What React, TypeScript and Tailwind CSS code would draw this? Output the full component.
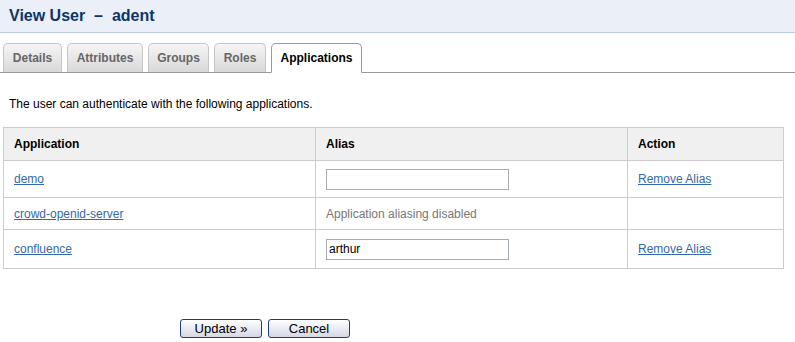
import React from 'react';

const TABS = [
    { label: 'Details', w: 'w-[59px]' },
    { label: 'Attributes', w: 'w-[76px]' },
    { label: 'Groups', w: 'w-[61px]' },
    { label: 'Roles', w: 'w-[52px]' },
    { label: 'Applications', w: 'w-[91px]' },
];

const ROWS = [
    { name: 'demo', alias: '', aliasing: true, h: 'h-[37px]' },
    { name: 'crowd-openid-server', alias: null, aliasing: false, h: 'h-[32px]' },
    { name: 'confluence', alias: 'arthur', aliasing: true, h: 'h-[39px]' },
];

export default function App() {
    return (
        <div className="w-[795px] h-[342px] bg-white text-[12px] text-black font-['Liberation_Sans',Arial,sans-serif]">
            {/* page title */}
            <div className="h-[33px] bg-[#eaeff8] border-b border-[#b8cde4] pl-[9px] flex items-center">
                <h1 className="text-[16px] font-bold text-[#0e3566] leading-none">View User &nbsp;–&nbsp; adent</h1>
            </div>

            {/* tabs */}
            <div className="mt-[10px] flex items-end gap-[5px] pl-[3px] border-b border-[#999] h-[30px]">
                {TABS.map((t) => {
                    const active = t.label === 'Applications';
                    return active ? (
                        <div
                            key={t.label}
                            className={`${t.w} h-[30px] -mb-px flex items-center justify-center bg-white border border-[#999] border-b-white rounded-t-[5px] font-bold text-black`}
                        >
                            {t.label}
                        </div>
                    ) : (
                        <div
                            key={t.label}
                            className={`${t.w} h-[29px] flex items-center justify-center bg-gradient-to-b from-[#f6f6f6] to-[#d8d8d8] border border-[#c6c6c6] border-b-0 rounded-t-[5px] font-bold text-[#666]`}
                        >
                            {t.label}
                        </div>
                    );
                })}
            </div>

            <p className="pl-[9px] mt-[24px] leading-[14px]">The user can authenticate with the following applications.</p>

            {/* applications table */}
            <table className="ml-[3px] mt-[16px] w-[781px] table-fixed border-collapse border border-[#ccc]">
                <colgroup>
                    <col className="w-[312px]" />
                    <col className="w-[312px]" />
                    <col />
                </colgroup>
                <thead>
                    <tr className="h-[33px] bg-[#f0f0f0]">
                        <th className="text-left font-bold pl-[10px] border border-[#ccc]">Application</th>
                        <th className="text-left font-bold pl-[10px] border border-[#ccc]">Alias</th>
                        <th className="text-left font-bold pl-[10px] border border-[#ccc]">Action</th>
                    </tr>
                </thead>
                <tbody>
                    {ROWS.map((r) => (
                        <tr key={r.name} className={r.h}>
                            <td className="pl-[10px] border border-[#ccc]">
                                <a href="#" className="text-[#3569a8] underline">{r.name}</a>
                            </td>
                            <td className="pl-[10px] border border-[#ccc]">
                                {r.aliasing ? (
                                    <input
                                        defaultValue={r.alias ?? ''}
                                        className="w-[183px] h-[21px] border border-[#a5acb2] px-[2px] text-[12px] outline-none"
                                    />
                                ) : (
                                    <span className="text-[#777]">Application aliasing disabled</span>
                                )}
                            </td>
                            <td className="pl-[10px] border border-[#ccc]">
                                {r.aliasing && (
                                    <a href="#" className="text-[#3569a8] underline">Remove Alias</a>
                                )}
                            </td>
                        </tr>
                    ))}
                </tbody>
            </table>

            {/* form buttons */}
            <div className="mt-[50px] pl-[180px] flex gap-[6px]">
                <button className="w-[82px] h-[19px] border border-[#1c3f6e] rounded-[3px] bg-gradient-to-b from-white to-[#d5d8e6] text-[13px] leading-none text-black">
                    Update »
                </button>
                <button className="w-[82px] h-[19px] border border-[#1c3f6e] rounded-[3px] bg-gradient-to-b from-white to-[#d5d8e6] text-[13px] leading-none text-black">
                    Cancel
                </button>
            </div>
        </div>
    );
}
